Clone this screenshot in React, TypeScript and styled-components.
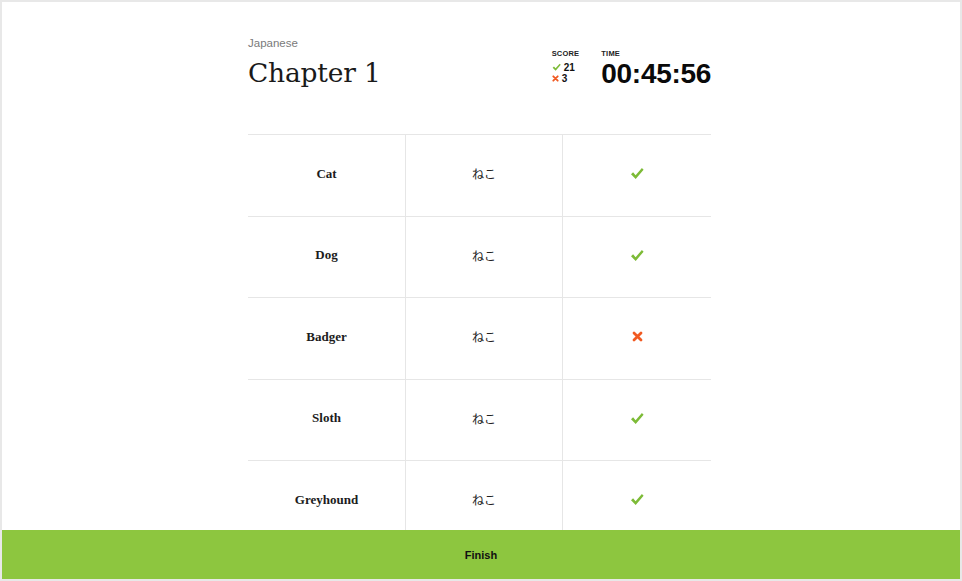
import React from "react";
import styled, { createGlobalStyle } from "styled-components";

const GlobalStyle = createGlobalStyle`
  html, body { margin: 0; padding: 0; background: #fff; }
  body { font-family: "Liberation Sans", Arial, sans-serif; color: #111; }
  * { box-sizing: border-box; }
`;

const Frame = styled.div`
  width: 100vw;
  height: 100vh;
  border: 2px solid #e8e8e8;
  display: flex;
  flex-direction: column;
  overflow: hidden;
  background: #fff;
`;

const Main = styled.main`
  flex: 1;
  overflow: hidden;
  display: flex;
  justify-content: center;
`;

const Column = styled.div`
  width: 463px;
  margin-left: -3px;
  padding-top: 34px;
`;

const Header = styled.header`
  display: flex;
  justify-content: space-between;
  align-items: flex-start;
`;

const TitleBlock = styled.div`
  display: flex;
  flex-direction: column;
`;

const Subject = styled.div`
  font-family: "Liberation Sans", Arial, sans-serif;
  font-size: 11.5px;
  line-height: 14px;
  color: #7a7a7a;
  margin-bottom: 8px;
`;

const Title = styled.h1`
  margin: 0;
  font-family: "DejaVu Serif", serif;
  font-weight: normal;
  font-size: 26.5px;
  line-height: 30px;
  color: #1a1a1a;
  letter-spacing: -0.2px;
`;

const Stats = styled.div`
  display: flex;
  gap: 22px;
  padding-top: 13px;
`;

const StatBlock = styled.div`
  display: flex;
  flex-direction: column;
`;

const StatLabel = styled.div`
  font-family: "Liberation Sans", Arial, sans-serif;
  font-weight: bold;
  font-size: 7.5px;
  line-height: 10px;
  letter-spacing: 0.2px;
  color: #222;
`;

const ScoreLine = styled.div<{ $first?: boolean }>`
  display: flex;
  align-items: center;
  gap: 3px;
  margin-top: ${(p) => (p.$first ? "3px" : "0")};
  font-family: "Liberation Sans", Arial, sans-serif;
  font-weight: bold;
  font-size: 10px;
  line-height: 11px;
  color: #111;
`;

const Timer = styled.div`
  font-family: "Liberation Sans", Arial, sans-serif;
  font-weight: bold;
  font-size: 28px;
  line-height: 30px;
  letter-spacing: -0.3px;
  color: #0a0a0a;
`;

const Table = styled.div`
  margin-top: 45px;
  display: flex;
  flex-direction: column;
`;

const Row = styled.div`
  display: grid;
  grid-template-columns: 158px 157px 148px;
  height: 81.5px;
  border-top: 1px solid #e6e6e6;
`;

const Cell = styled.div<{ $divider?: boolean }>`
  display: flex;
  align-items: center;
  justify-content: center;
  padding-bottom: 3px;
  border-right: ${(p) => (p.$divider ? "1px solid #e6e6e6" : "none")};
`;

const Word = styled.span`
  font-family: "Liberation Serif", "Times New Roman", serif;
  font-weight: bold;
  font-size: 13px;
  color: #1c1c1c;
`;

const Answer = styled.span`
  font-family: "Noto Sans CJK JP", sans-serif;
  font-size: 12px;
  color: #222;
`;

const Footer = styled.button`
  height: 49px;
  flex-shrink: 0;
  border: none;
  background: #8dc63f;
  display: flex;
  align-items: center;
  justify-content: center;
  font-family: "Liberation Sans", Arial, sans-serif;
  font-weight: bold;
  font-size: 11px;
  color: #111;
  cursor: pointer;
  padding: 0;
`;

const Check = ({ size = 14 }: { size?: number }) => (
  <svg width={size} height={size * 0.93} viewBox="0 0 14 13" aria-hidden>
    <path
      d="M1 7.2 L3.1 5.3 L5.6 8.2 L11.9 1 L13.6 2.7 L5.7 11.9 Z"
      fill="#7dbb37"
    />
  </svg>
);

const Cross = ({ size = 11 }: { size?: number }) => (
  <svg width={size} height={size} viewBox="0 0 11 11" aria-hidden>
    <path
      d="M2 2 L9 9 M9 2 L2 9"
      stroke="#f15a22"
      strokeWidth={2.8}
      strokeLinecap="round"
    />
  </svg>
);

const rows = [
  { word: "Cat", answer: "ねこ", correct: true },
  { word: "Dog", answer: "ねこ", correct: true },
  { word: "Badger", answer: "ねこ", correct: false },
  { word: "Sloth", answer: "ねこ", correct: true },
  { word: "Greyhound", answer: "ねこ", correct: true },
];

export default function App() {
  return (
    <>
      <GlobalStyle />
      <Frame>
        <Main>
          <Column>
            <Header>
              <TitleBlock>
                <Subject>Japanese</Subject>
                <Title>Chapter 1</Title>
              </TitleBlock>
              <Stats>
                <StatBlock>
                  <StatLabel>SCORE</StatLabel>
                  <ScoreLine $first>
                    <Check size={9} />
                    21
                  </ScoreLine>
                  <ScoreLine>
                    <Cross size={7} />
                    3
                  </ScoreLine>
                </StatBlock>
                <StatBlock>
                  <StatLabel>TIME</StatLabel>
                  <Timer>00:45:56</Timer>
                </StatBlock>
              </Stats>
            </Header>
            <Table>
              {rows.map((r) => (
                <Row key={r.word}>
                  <Cell $divider>
                    <Word>{r.word}</Word>
                  </Cell>
                  <Cell $divider>
                    <Answer>{r.answer}</Answer>
                  </Cell>
                  <Cell>{r.correct ? <Check /> : <Cross />}</Cell>
                </Row>
              ))}
            </Table>
          </Column>
        </Main>
        <Footer>Finish</Footer>
      </Frame>
    </>
  );
}
